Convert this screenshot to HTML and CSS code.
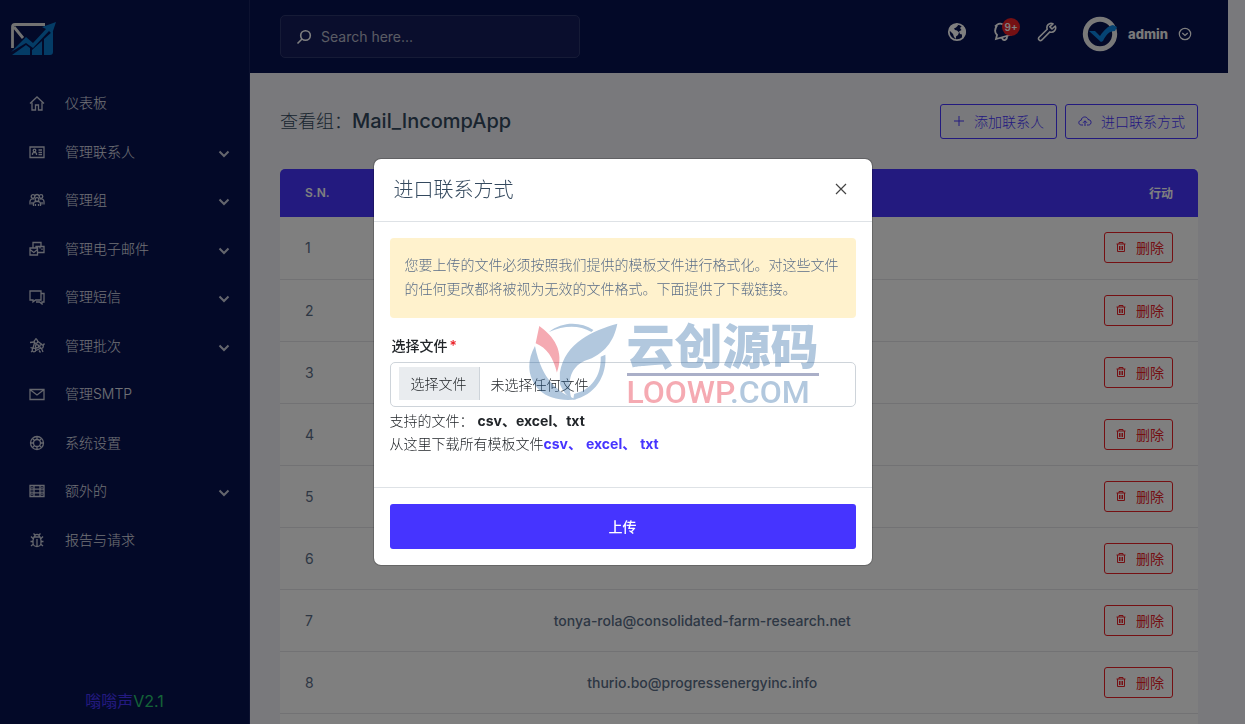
FILE: index.html
```html
<!DOCTYPE html>
<html lang="zh-CN">
<head>
    <meta charset="UTF-8">
    <meta name="viewport" content="width=device-width, initial-scale=1.0">
    <title>查看组：Mail_IncompApp</title>
    <link rel="stylesheet" href="styles.css">
</head>
<body class="modal-open">
    <!-- 图标 -->
    <svg class="sprite" aria-hidden="true">
        <symbol id="i-home" viewBox="0 0 16 16"><path d="M1 8.500 8 2l7 6.500M3 7.500V15h3.500v-5h3v5H13V7.500"/></symbol>
        <symbol id="i-card" viewBox="0 0 16 16"><path d="M1 3h14v10.500H1zM3.500 11V9.500l1-1h2l1 1V11M9.500 6H13M9.500 8.300H13M9.500 10.500H13"/><circle cx="5.500" cy="6.500" r="1.300"/></symbol>
        <symbol id="i-users" viewBox="0 0 16 16"><circle cx="4" cy="4.500" r="1.800"/><circle cx="12" cy="4.500" r="1.800"/><circle cx="8" cy="7.500" r="1.900"/><path d="M1 12.500V9.500C1 7.500 3 6.500 5 7M15 12.500V9.500c0-2-2-3-4-2.500M4.500 14v-2c0-3.500 7-3.500 7 0v2M6 4c.5-2 3.500-2 4 0M3 12.500V10M13 12.500V10M6.500 14v-2M9.500 14v-2"/></symbol>
        <symbol id="i-mails" viewBox="0 0 16 16"><path d="M4 7V1.500h8V5M1 7h7.500v7H1zM1 8.500l3.800 3 3.700-3M8.500 11.500H15V5.500H7V7M11 5.500v2M13 7.500v1.500"/></symbol>
        <symbol id="i-chat" viewBox="0 0 16 16"><path d="M1 2h11v9H6.500L4 13v-2H1zM12.500 4.500H15v8.500h-2v2l-2.500-2H7"/></symbol>
        <symbol id="i-batch" viewBox="0 0 16 16"><circle cx="7" cy="3.500" r="1.800"/><circle cx="5" cy="12" r="1.800"/><circle cx="12.500" cy="8.500" r="1.800"/><circle cx="8" cy="8.300" r="1.600"/><path d="M7 0v1.700M1 4.500l4-.5M9 3.500l4 3M5.500 5 4 10M7 5.300v1.500M6.500 11l1-1.500M7 12.500l5-2.500M10.700 8.500H9.500M1.500 9.500 4 10.300M2 14l1.500-1M12.500 10.500 14 14M14 7.500l1.500-2M10 12.500l1.500 2"/></symbol>
        <symbol id="i-mail" viewBox="0 0 16 16"><path d="M1 3.500h14v10H1zM1.500 4 8 9l6.500-5"/></symbol>
        <symbol id="i-ring" viewBox="0 0 16 16"><circle cx="8" cy="8" r="6.500"/><circle cx="8" cy="8" r="3.500"/><path d="m3.400 3.400 2.100 2.100m5 5 2.100 2.100m0-9.200-2.100 2.100m-5 5-2.100 2.100M8 1.500V4M8 12v2.500M1.500 8H4M12 8h2.500"/></symbol>
        <symbol id="i-server" viewBox="0 0 16 16"><path d="M1 2.500h14v11H1zM1 6.200h14M1 9.800h14M5 2.500v11M11 2.500v11M3 4v1M3 7.500v1M3 11v1M13 4v1M13 7.500v1M13 11v1"/></symbol>
        <symbol id="i-bug" viewBox="0 0 16 16"><path d="M5 5h6l1 3v3c0 2-2 3.500-4 3.500S4 13 4 11V8zM5.500 5c0-3.500 5-3.500 5 0M8 7v7M1.500 9.500H4M12 9.500h2.500M2 4.500 4.500 7M14 4.500 11.500 7M2 14l2.500-2M14 14l-2.500-2M4.500 1.500l1.500 1.500M11.500 1.500 10 3"/></symbol>
        <symbol id="i-down" viewBox="0 0 12 12"><path d="m1.500 3.500 4.500 4.500 4.500-4.500"/></symbol>
        <symbol id="i-trash" viewBox="0 0 12 12"><path d="M1.500 3h9M4 3V1.500h4V3M2.500 3v7.500h7V3M4.500 5v4M6 5v4M7.500 5v4"/></symbol>
    </svg>

    <div class="page">
        <aside class="sidebar">
            <a class="logo" href="#" aria-label="首页">
                <svg width="48" height="36" viewBox="0 0 48 36">
                    <path d="M3.500 27V6q0-2.500 2.500-2.500h30M5 6l9 11" fill="none" stroke="#e4e4e4" stroke-width="2.800"/>
                    <g fill="#0878cc">
                        <path d="m3 34 14-10 4 3v7zM23 29l10-9v14H23zM35 18l9-8v21q0 3-3 3h-6z"/>
                        <path d="m2 31 15-15 7 6L37 8l-4-2L47 1l-4 12-3-3-16 17-7-5z"/>
                    </g>
                </svg>
            </a>
            <nav class="menu">
                <a href="#"><svg class="icon"><use href="#i-home"/></svg><span>仪表板</span></a>
                <a href="#"><svg class="icon"><use href="#i-card"/></svg><span>管理联系人</span><svg class="arrow"><use href="#i-down"/></svg></a>
                <a href="#"><svg class="icon"><use href="#i-users"/></svg><span>管理组</span><svg class="arrow"><use href="#i-down"/></svg></a>
                <a href="#"><svg class="icon"><use href="#i-mails"/></svg><span>管理电子邮件</span><svg class="arrow"><use href="#i-down"/></svg></a>
                <a href="#"><svg class="icon"><use href="#i-chat"/></svg><span>管理短信</span><svg class="arrow"><use href="#i-down"/></svg></a>
                <a href="#"><svg class="icon"><use href="#i-batch"/></svg><span>管理批次</span><svg class="arrow"><use href="#i-down"/></svg></a>
                <a href="#"><svg class="icon"><use href="#i-mail"/></svg><span>管理SMTP</span></a>
                <a href="#"><svg class="icon"><use href="#i-ring"/></svg><span>系统设置</span></a>
                <a href="#"><svg class="icon"><use href="#i-server"/></svg><span>额外的</span><svg class="arrow"><use href="#i-down"/></svg></a>
                <a href="#"><svg class="icon"><use href="#i-bug"/></svg><span>报告与请求</span></a>
            </nav>
            <p class="version"><span class="version-name">嗡嗡声</span><span class="version-no">V2.1</span></p>
        </aside>

        <div class="main">
            <header class="topbar">
                <form class="search">
                    <svg width="16" height="16" viewBox="0 0 16 16" fill="none" stroke="#fff" stroke-width="1.600"><circle cx="9.500" cy="6.500" r="4.800"/><path d="M6 10l-4.500 4.500"/></svg>
                    <input type="search" placeholder="Search here..." aria-label="Search here...">
                </form>
                <div class="tools">
                    <button type="button" class="tool" aria-label="网站">
                        <svg width="20" height="20" viewBox="0 0 20 20"><circle cx="10" cy="10" r="8.200" fill="none" stroke="#fff" stroke-width="1.800"/><path fill="#fff" d="M2 8l3-5 5-1.500 1 2-2 2-2 1 1 1.500 2 .5 2 2-1 2.500-2 1.500v2.500L7 15l-1-3-2-2zM18 6l-3-2-2 2 1.500 2-2.500 1.500 1 2.500 2 .5v4l3-3 1-4.500z"/></svg>
                    </button>
                    <button type="button" class="tool" aria-label="通知">
                        <svg width="20" height="20" viewBox="0 0 20 20" fill="none" stroke="#fff" stroke-width="1.800"><path d="M3 4.500 5.500 2.500C7 1.500 9 1.500 11 2.500M5 3.500C2 8 3 11 5 13l-1 4 14-4c-3-1-3-4-4-6M10 15.500c1 4 5 3 5-1"/></svg>
                        <span class="badge">9+</span>
                    </button>
                    <button type="button" class="tool" aria-label="设置">
                        <svg width="20" height="20" viewBox="0 0 20 20" fill="none" stroke="#fff" stroke-width="1.600" stroke-linejoin="round"><path d="M16 1.800c-4-1.500-7 2-5.800 5.400L1.800 15.500c-1 2 1 3.800 2.800 2.800l8.300-8.400c3.500 1.200 6.900-2 5.400-5.900L15 7l-2.200-2.200zM4 16h.1"/></svg>
                    </button>
                    <button type="button" class="user">
                        <svg width="36" height="36" viewBox="0 0 36 36"><circle cx="18" cy="18" r="14.700" fill="#071251" stroke="#f2f2f2" stroke-width="5"/><path d="M7 15h6l5 5c4-6 8-10 13-11l4 2-2 4c-6 0-9 4-12 10l-2 1z" fill="#0b86e6"/></svg>
                        <span>admin</span>
                        <svg width="14" height="14" viewBox="0 0 14 14" fill="none" stroke="#fff" stroke-width="1.200"><circle cx="7" cy="7" r="5.700"/><path d="m4.300 6 2.700 2.500L9.700 6"/></svg>
                    </button>
                </div>
            </header>

            <main class="content">
                <div class="title-row">
                    <h1>查看组：<span>Mail_IncompApp</span></h1>
                    <div class="actions">
                        <button type="button" class="btn-outline">
                            <svg width="12" height="12" viewBox="0 0 12 12"><path d="M6 1v10M1 6h10"/></svg>添加联系人
                        </button>
                        <button type="button" class="btn-outline">
                            <svg width="14" height="12" viewBox="0 0 14 12"><path d="M5 10H3.500C0 10 0 5.500 3.200 5.300 3.500 1 9.500 1 10 4.500c4 0 4 5.500.5 5.500H9M7 11V6M5 7.800l2-2 2 2"/></svg>进口联系方式
                        </button>
                    </div>
                </div>

                <table class="contacts">
                    <thead>
                        <tr><th class="col-sn">S.N.</th><th class="col-mail"></th><th class="col-action">行动</th></tr>
                    </thead>
                    <tbody>
                        <tr><td>1</td><td></td><td><button type="button" class="btn-delete"><svg><use href="#i-trash"/></svg>删除</button></td></tr>
                        <tr><td>2</td><td></td><td><button type="button" class="btn-delete"><svg><use href="#i-trash"/></svg>删除</button></td></tr>
                        <tr><td>3</td><td></td><td><button type="button" class="btn-delete"><svg><use href="#i-trash"/></svg>删除</button></td></tr>
                        <tr><td>4</td><td></td><td><button type="button" class="btn-delete"><svg><use href="#i-trash"/></svg>删除</button></td></tr>
                        <tr><td>5</td><td></td><td><button type="button" class="btn-delete"><svg><use href="#i-trash"/></svg>删除</button></td></tr>
                        <tr><td>6</td><td></td><td><button type="button" class="btn-delete"><svg><use href="#i-trash"/></svg>删除</button></td></tr>
                        <tr><td>7</td><td>tonya-rola@consolidated-farm-research.net</td><td><button type="button" class="btn-delete"><svg><use href="#i-trash"/></svg>删除</button></td></tr>
                        <tr><td>8</td><td>thurio.bo@progressenergyinc.info</td><td><button type="button" class="btn-delete"><svg><use href="#i-trash"/></svg>删除</button></td></tr>
                    </tbody>
                </table>
                <div class="table-footer"></div>
            </main>
        </div>
    </div>

    <!-- 导入弹窗 -->
    <div class="backdrop">
        <form class="modal" role="dialog" aria-labelledby="modalTitle">
            <div class="modal-header">
                <h2 id="modalTitle">进口联系方式</h2>
                <button type="button" class="close" aria-label="关闭">
                    <svg width="12" height="12" viewBox="0 0 12 12"><path d="m1 1 10 10M11 1 1 11"/></svg>
                </button>
            </div>
            <div class="modal-body">
                <p class="alert">您要上传的文件必须按照我们提供的模板文件进行格式化。对这些文件的任何更改都将被视为无效的文件格式。下面提供了下载链接。</p>
                <label class="field-label" for="file">选择文件<span class="required">*</span></label>
                <div class="file-box">
                    <span class="file-button">选择文件</span>
                    <span class="file-name">未选择任何文件</span>
                    <input type="file" id="file" accept=".csv,.xlsx,.txt">
                </div>
                <p class="hint">支持的文件： <b>csv、excel、txt</b></p>
                <p class="hint">从这里下载所有模板文件<a href="#">csv、</a> <a href="#">excel、</a> <a href="#">txt</a></p>
            </div>
            <div class="modal-footer">
                <button type="submit" class="btn-upload">上传</button>
            </div>
        </form>
    </div>

    <!-- 水印 -->
    <div class="watermark">
        <svg width="93" height="81" viewBox="456 30 280 244">
            <g fill="#2362a1">
                <path d="M480 105C455 150 455 200 495 240c25 22 65 32 110 26C555 248 500 210 480 105z"/>
                <path d="M595 267c65-12 102-70 97-135l-14 6c2 60-30 100-80 112z"/>
                <path d="M522 63c40-32 95-32 134-6l-6 6c-38-22-82-20-128 0z"/>
                <path d="M728 38C655 58 570 95 555 185v35c8 18 18 35 35 44-18-70 10-100 40-114 60-20 88-60 98-112z"/>
            </g>
            <path d="M493 45l-11 52c33 13 53 43 64 88 24-65-11-110-53-140z" fill="#e20c23"/>
        </svg>
        <div class="watermark-text">
            <span class="watermark-cn">云创源码</span>
            <span class="watermark-en"><span class="red">LOOWP</span>.COM</span>
        </div>
    </div>
</body>
</html>
```

FILE: styles.css
```css
* {
    box-sizing: border-box;
}

body {
    margin: 0;
    font-family: Inter, "Noto Sans CJK SC", sans-serif;
    font-size: 14px;
    font-weight: 300;
    color: #212529;
    background: #f3f3f9;
}

body.modal-open {
    overflow: hidden;
}

h1, h2, p {
    margin: 0;
    font-weight: 300;
}

a {
    text-decoration: none;
}

button, input {
    font: inherit;
}

button {
    cursor: pointer;
}

.sprite {
    position: absolute;
    width: 0;
    height: 0;
}

.page {
    display: flex;
    height: 100vh;
    overflow: hidden;
    padding-right: 17px;
}

/* 侧边栏 */
.sidebar {
    display: flex;
    flex-direction: column;
    flex: 0 0 250px;
    background: #071251;
    border-right: 1px solid #1b2560;
}

.logo {
    display: flex;
    padding: 21px 9px 22px;
}

.menu a {
    display: flex;
    align-items: center;
    padding: 12px 19px 12px 29px;
    line-height: 1.75;
    color: #e0e2ec;
}

.menu .icon {
    width: 16px;
    height: 16px;
    margin-right: 20px;
    fill: none;
    stroke: #c9ccda;
    stroke-width: 1.3;
}

.menu .arrow {
    width: 12px;
    height: 12px;
    margin-top: 4px;
    margin-left: auto;
    fill: none;
    stroke: #c9ccda;
    stroke-width: 2;
}

.version {
    margin-top: auto;
    padding-bottom: 11px;
    font-size: 16px;
    font-weight: 400;
    line-height: 24px;
    text-align: center;
}

.version-name {
    color: #4634ff;
}

.version-no {
    color: #28c76f;
}

/* 顶栏 */
.main {
    flex: 1;
    min-width: 0;
}

.topbar {
    display: flex;
    align-items: center;
    justify-content: space-between;
    height: 73px;
    padding: 0 36px 0 30px;
    background: #071251;
}

.search {
    display: flex;
    align-items: center;
    gap: 9px;
    width: 300px;
    height: 43px;
    padding: 0 15px;
    background: #151d5a;
    border: 1px solid #2d366d;
    border-radius: 5px;
}

.search input {
    flex: 1;
    min-width: 0;
    padding: 0;
    font-size: 14px;
    font-weight: 400;
    color: #fff;
    background: none;
    border: 0;
    outline: 0;
}

.search input::placeholder {
    color: #b5b8c8;
    opacity: 1;
}

.tools {
    display: flex;
    align-items: center;
    gap: 25px;
    padding-bottom: 6px;
}

.tool {
    position: relative;
    display: flex;
    padding: 0 0 3px;
    background: none;
    border: 0;
}

.badge {
    position: absolute;
    top: -4px;
    left: 10px;
    width: 18px;
    height: 18px;
    font-size: 10px;
    font-weight: 600;
    line-height: 18px;
    text-align: center;
    color: #fff;
    background: #ea2027;
    border-radius: 50%;
}

.user {
    display: flex;
    align-items: center;
    gap: 10px;
    padding: 0;
    font-size: 13px;
    font-weight: 800;
    color: #f2f2f2;
    background: none;
    border: 0;
}

/* 内容 */
.content {
    padding: 31px 30px;
}

.title-row {
    display: flex;
    align-items: center;
    justify-content: space-between;
    margin-bottom: 30px;
}

.title-row h1 {
    font-size: 18px;
    line-height: 27px;
    color: #34495e;
}

.title-row h1 span {
    font-size: 20px;
    font-weight: 500;
}

.actions {
    display: flex;
    gap: 8px;
}

.btn-outline {
    display: flex;
    align-items: center;
    gap: 9px;
    height: 35px;
    padding: 0 12px 2px;
    color: #4634ff;
    background: none;
    border: 1px solid #4634ff;
    border-radius: 3px;
}

.btn-outline svg {
    fill: none;
    stroke: #4634ff;
}

/* 表格 */
.contacts {
    width: 100%;
    table-layout: fixed;
    border-collapse: collapse;
    background: #fff;
}

.contacts th {
    height: 48px;
    padding: 0 25px 2px;
    font-size: 12px;
    font-weight: 600;
    text-align: left;
    color: #fff;
    background: #4634ff;
}

.contacts th:first-child {
    border-radius: 5px 0 0 0;
}

.contacts th:last-child {
    border-radius: 0 5px 0 0;
}

.col-sn {
    width: 19%;
}

.col-mail {
    width: 54%;
}

.contacts td {
    height: 62px;
    padding: 0 25px;
    font-weight: 400;
    color: #5b6e88;
    border-bottom: 1px solid #e4e4e8;
}

.contacts td:nth-child(2) {
    font-weight: 500;
    text-align: center;
}

.contacts th:last-child,
.contacts td:last-child {
    text-align: right;
}

.btn-delete {
    display: inline-flex;
    align-items: center;
    gap: 9px;
    height: 31px;
    padding: 0 8px 1px 10px;
    vertical-align: middle;
    color: #ea2027;
    background: none;
    border: 1px solid #ea2027;
    border-radius: 3px;
}

.btn-delete svg {
    width: 12px;
    height: 12px;
    fill: none;
    stroke: #ea2027;
}

.table-footer {
    height: 60px;
    background: #fff;
}

/* 弹窗 */
.backdrop {
    position: fixed;
    inset: 0;
    display: flex;
    align-items: center;
    justify-content: center;
    background: rgba(0, 0, 0, 0.5);
}

.modal {
    width: 100%;
    max-width: 500px;
    background: #fff;
    background-clip: padding-box;
    border: 1px solid rgba(0, 0, 0, 0.2);
    border-radius: 8px;
}

.modal-header {
    display: flex;
    align-items: center;
    justify-content: space-between;
    padding: 16px 25px 16px 20px;
    border-bottom: 1px solid #dee2e6;
}

.modal-header h2 {
    font-size: 20px;
    line-height: 30px;
    color: #34495e;
}

.close {
    display: flex;
    padding: 0 0 2px;
    background: none;
    border: 0;
}

.close svg {
    fill: none;
    stroke: #444;
    stroke-width: 1.2;
}

.modal-body {
    padding: 16px 16px 32px;
}

.alert {
    margin-bottom: 16px;
    padding: 15px 15px 17px;
    line-height: 24px;
    color: #5b6e88;
    background: #fff2cd;
    border-radius: 4px;
}

.field-label {
    display: block;
    margin-bottom: 4px;
    padding-left: 2px;
    font-weight: 500;
    line-height: 24px;
}

.required {
    margin-left: 2px;
    color: #ea2027;
}

.file-box {
    position: relative;
    display: flex;
    align-items: center;
    gap: 11px;
    height: 45px;
    margin-bottom: 2px;
    padding: 0 8px 2px;
    border: 1px solid #ced4da;
    border-radius: 5px;
}

.file-box input {
    position: absolute;
    inset: 0;
    width: 100%;
    opacity: 0;
}

.file-button {
    padding: 0 12px;
    line-height: 33px;
    background: #e9ecef;
    border-right: 1px solid #ced4da;
}

.hint {
    line-height: 23px;
}

.hint b,
.hint a {
    font-weight: 700;
}

.hint a {
    color: #4634ff;
}

.modal-footer {
    padding: 16px;
    border-top: 1px solid #dee2e6;
}

.btn-upload {
    width: 100%;
    height: 45px;
    padding: 0 0 2px;
    font-weight: 500;
    color: #fff;
    background: #4634ff;
    border: 0;
    border-radius: 3px;
}

/* 水印 */
.watermark {
    position: fixed;
    top: 50%;
    left: 50%;
    display: flex;
    gap: 7px;
    margin: -41px 0 0 -96px;
    opacity: 0.35;
    pointer-events: none;
}

.watermark-text {
    display: flex;
    flex-direction: column;
    color: #2362a1;
}

.watermark-cn {
    font-size: 48px;
    font-weight: 900;
    line-height: 52px;
    border-bottom: 3px solid #0c1a62;
}

.watermark-en {
    font-family: Roboto, sans-serif;
    font-size: 32px;
    font-weight: 500;
    line-height: 32px;
}

.red {
    color: #e20c23;
}
```
